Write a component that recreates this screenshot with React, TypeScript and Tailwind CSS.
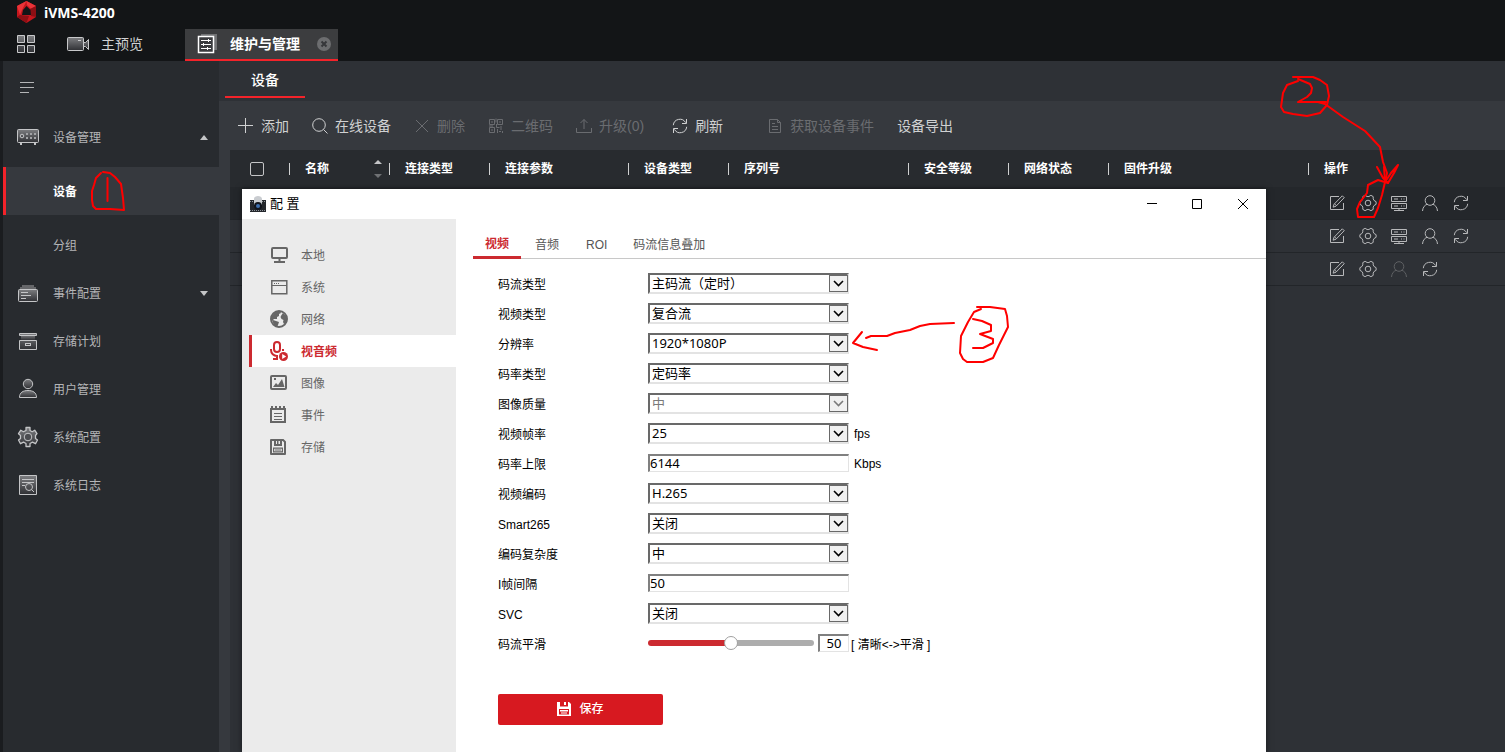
import { useState } from "react";
import type { ReactNode } from "react";

type IconProps = {
  className?: string;
  size?: number;
  children: ReactNode;
};

const LineIcon = ({ className = "", size = 16, children }: IconProps) => (
  <svg
    className={`shrink-0 ${className}`}
    width={size}
    height={size}
    viewBox={`0 0 ${size} ${size}`}
    fill="none"
    stroke="currentColor"
    aria-hidden="true"
  >
    {children}
  </svg>
);

/* ---------- Shared icons ---------- */

const RefreshIcon = () => (
  <LineIcon>
    <path d="M1.3 7.2A6.6 6.6 0 0 1 13.6 4.6M14.5 1v4.5H10M14.7 8.8A6.6 6.6 0 0 1 2.4 11.4M1.5 15v-4.5H6" />
  </LineIcon>
);

const EditIcon = () => (
  <LineIcon>
    <path d="M10 1.5H1.5v13h13V8" />
    <path d="M13.3.8l1.9 1.9-8.2 8.5-2.9 1 .9-2.9zM5.500 8.800l1.900 1.900" />
  </LineIcon>
);

const GearIcon = () => (
  <LineIcon size={18}>
    <path
      strokeLinejoin="round"
      d="M17.1 10.3V7.7L15.1 6.500l-.9-1.600V2.600L11.900 1.300 9.900 2.500H8.100L6.100 1.300 3.800 2.600v2.300L2.900 6.500.9 7.700v2.600l2 1.200.9 1.600v2.300l2.300 1.300 2-1.200h1.800l2 1.200 2.300-1.300v-2.300l.9-1.600z"
    />
    <circle cx="9" cy="9" r="2.8" />
  </LineIcon>
);

const ServerIcon = () => (
  <LineIcon>
    <path d="M.5 1.500h15v5H.5zM.5 8.500h15v5H.5zM8 13.500v2M3 15.500h10M3 4h4M3 11h4M10 4h1M12.500 4h1M10 11h1M12.500 11h1" />
  </LineIcon>
);

const PersonIcon = () => (
  <LineIcon>
    <circle cx="8" cy="5.500" r="4.800" />
    <path d="M.5 16c.3-4 2.500-6 4.800-6.800M15.500 16c-.3-4-2.500-6-4.800-6.800" />
  </LineIcon>
);

const DiskIcon = () => (
  <svg className="shrink-0" width="16" height="16" viewBox="0 0 16 16" aria-hidden="true">
    <path
      fill="currentColor"
      fillRule="evenodd"
      d="M0 1a1 1 0 0 1 1-1h12.500L16 2.500V15a1 1 0 0 1-1 1H1a1 1 0 0 1-1-1zM2 2v12h12V3.300L12.700 2H12v5H4V2zM6 2v3h1V2zM8.500 2v3H10V2zM3 8.500h10v5H3zM4.200 9.700v2.600h7.600V9.700z"
    />
    <path stroke="currentColor" d="M5 11h6" />
  </svg>
);

const SaveIcon = () => (
  <svg className="shrink-0" width="14" height="14" viewBox="0 0 14 14" aria-hidden="true">
    <path
      fill="currentColor"
      fillRule="evenodd"
      d="M0 0h12l2 2v12H0zM3 0v4.500h8V0H9v3H7V0zM2 7v5.500h10V7zM3 8h8v1.500H3zM4 10.500h6v1H4z"
    />
  </svg>
);

/* ---------- Left navigation ---------- */

const NavIcon = ({ children }: { children: ReactNode }) => (
  <svg
    className="shrink-0"
    width="22"
    height="22"
    viewBox="0 0 22 22"
    fill="url(#metal)"
    stroke="#c4c5c7"
    aria-hidden="true"
  >
    {children}
  </svg>
);

const navItems: { label: string; icon: ReactNode }[] = [
  {
    label: "事件配置",
    icon: (
      <NavIcon>
        <path stroke="none" fill="#66676a" d="M5 3h12v2H5zM3 5h16v2H3z" />
        <rect x="1.500" y="7.500" width="19" height="12" rx="1" />
        <path d="M4 10.500h7M4 13.500h10M4 16.500h5" />
      </NavIcon>
    ),
  },
  {
    label: "存储计划",
    icon: (
      <NavIcon>
        <path stroke="none" d="M4 5h14v5H4z" />
        <path d="M2.500 3.500h17v2h-17zM2.500 10.500h17v9h-17z" />
        <rect x="8.500" y="13.500" width="5" height="2" fill="none" />
      </NavIcon>
    ),
  },
  {
    label: "用户管理",
    icon: (
      <NavIcon>
        <circle cx="11" cy="6" r="4.700" />
        <path d="M2.500 19.500c0-5 3.500-7 8.500-7s8.500 2 8.500 7z" />
      </NavIcon>
    ),
  },
  {
    label: "系统配置",
    icon: (
      <NavIcon>
        <path
          d="M9 1.500h4v3l2.200 1.200 2.500-1.500 2.300 3.500L18.500 9.500v3l2 1.500-2 3.700-3-1.500L13 17.500v3H9v-3l-2.500-1.300-3 1.500-2-3.700 2-1.500v-3L1.500 7.700l2.300-3.500 2.700 1.500L9 4.500z"
          strokeLinejoin="round"
          strokeWidth="1.300"
        />
        <circle cx="11" cy="11" r="3.800" fill="#4b4c50" />
      </NavIcon>
    ),
  },
  {
    label: "系统日志",
    icon: (
      <NavIcon>
        <path d="M2.500 1.500h17v19h-17z" />
        <path fill="none" d="M5 5.500h12M5 8.500h12M5 11.500h3M14.500 15.500l2.500 2.500" />
        <circle cx="12" cy="13" r="3.500" fill="none" />
      </NavIcon>
    ),
  },
];

const Sidebar = () => (
  <nav className="w-[219px] shrink-0 border-l-[3px] border-[#1a1c1f] bg-[#282b2f] text-xs text-[#b4b5b7]">
    <button type="button" aria-label="折叠菜单" className="flex h-13 items-center pl-4">
      <svg width="16" height="14" viewBox="0 0 16 14" stroke="#b4b5b7" aria-hidden="true">
        <path d="M1 2.500h14M1 7.500h14M1 12.500h9" />
      </svg>
    </button>
    <a href="#devices" className="flex h-12 items-center gap-[14px] pl-[14px] pr-[11px]">
      <NavIcon>
        <rect x=".5" y="3.500" width="21" height="13" rx="1" />
        <circle cx="5" cy="10" r="1.800" fill="none" />
        <path stroke="#a2a3a6" strokeWidth="2" strokeDasharray="2 2" d="M9 8h11M9 12h11" />
        <path strokeWidth="2" d="M3 18h2M17 18h2" />
      </NavIcon>
      <span className="grow pt-[2px]">设备管理</span>
      <svg width="8" height="5" viewBox="0 0 8 5" aria-hidden="true">
        <path fill="#c4c5c7" d="M4 0l4 5H0z" />
      </svg>
    </a>
    <div className="flex flex-col gap-[6px] pt-[6px]">
      <a
        href="#device"
        className="flex h-12 items-center border-l-[3px] border-[#f4232a] bg-[#36393e] pt-[2px] pl-[47px] font-bold text-white"
      >
        设备
      </a>
      <a href="#group" className="flex h-12 items-center pt-[2px] pl-[50px]">
        分组
      </a>
    </div>
    {navItems.map((item, i) => (
      <a key={item.label} href="#nav" className="flex h-12 items-center gap-[14px] pl-[14px] pr-[11px]">
        {item.icon}
        <span className="grow pt-[2px]">{item.label}</span>
        {i === 0 && (
          <svg width="8" height="5" viewBox="0 0 8 5" aria-hidden="true">
            <path fill="#c4c5c7" d="M0 0h8L4 5z" />
          </svg>
        )}
      </a>
    ))}
  </nav>
);

/* ---------- Header ---------- */

const Header = () => (
  <header className="bg-[#131517]">
    <div className="flex h-[29px] items-start gap-2 pl-[17px]">
      <svg width="19" height="24" viewBox="0 0 19 24" aria-hidden="true">
        <path fill="#c5161d" d="M9.500 1L19 6v11l-9.500 6L0 17V6z" />
        <path fill="#ea3338" d="M9.500 1L19 6l-5 3-4-4zM0 6l9.500-5L5 10l-2 5z" />
        <path fill="#8d0f14" d="M0 17l3-2 9 1-2.500 7zM19 6v11l-5-1-1-7z" />
        <path fill="#131517" d="M9.500 6l4 4 .5 5H5l1-5z" />
      </svg>
      <h1 className="font-['Open_Sans'] text-sm leading-[26px] font-bold text-white">iVMS-4200</h1>
    </div>
    <div className="flex h-8 items-stretch text-sm text-[#d0d1d2]">
      <button type="button" aria-label="应用" className="flex items-center pb-[2px] pl-[17px]">
        <svg width="18" height="18" viewBox="0 0 18 18" fill="url(#metal)" stroke="#c8c9cb" aria-hidden="true">
          <path d="M.5.500h7v7h-7zM10.500.500h7v7h-7zM.5 10.500h7v7h-7zM10.500 10.500h7v7h-7z" />
        </svg>
      </button>
      <button type="button" className="ml-8 flex items-center gap-3 pb-[2px]">
        <svg width="22" height="16" viewBox="0 0 22 16" fill="url(#metal)" stroke="#c8c9cb" aria-hidden="true">
          <rect x=".5" y="1.500" width="16" height="13" rx="1" />
          <path d="M16.500 6.500h2l3-3v10l-3-3h-2zM11 4.500h3" />
        </svg>
        主预览
      </button>
      <div className="ml-[42px] flex items-center border-b-2 border-[#f4232a] bg-[#3c3d3f] pr-[7px] pl-3 text-white">
        <button type="button" className="flex items-center gap-3 font-bold">
          <svg width="21" height="20" viewBox="0 0 21 20" fill="none" stroke="#fff" aria-hidden="true">
            <path stroke="none" fill="#717274" d="M4 0h16v16h-3V3H4z" />
            <rect x="1.500" y="2.500" width="15" height="16" fill="#3a3b3e" strokeWidth="1.500" />
            <path d="M4 6.500h10M4 10.500h10M4 14.500h10M11.500 5v3M6.500 9v3M10.500 13v3" />
          </svg>
          维护与管理
        </button>
        <button type="button" aria-label="关闭标签" className="ml-[17px]">
          <svg width="14" height="14" viewBox="0 0 14 14" aria-hidden="true">
            <circle cx="7" cy="7" r="7" fill="#6c6d6f" />
            <path stroke="#36373a" strokeWidth="2" d="M4.500 4.500l5 5M9.500 4.500l-5 5" />
          </svg>
        </button>
      </div>
    </div>
  </header>
);

/* ---------- Device page ---------- */

type Tool = { label: string; icon?: ReactNode; disabled?: boolean; className?: string };

const tools: Tool[] = [
  { label: "添加", icon: <LineIcon><path d="M7.500 0v15M0 7.500h15" /></LineIcon> },
  {
    label: "在线设备",
    icon: <LineIcon><circle cx="7" cy="7" r="6.300" /><path d="M11.500 11.500l4 4" /></LineIcon>,
  },
  { label: "删除", disabled: true, icon: <LineIcon><path d="M2 2l12 12M14 2L2 14" /></LineIcon> },
  {
    label: "二维码",
    disabled: true,
    icon: (
      <LineIcon>
        <path d="M1.500 1.500h5v5h-5zM9.500 1.500h5v5h-5zM1.500 9.500h5v5h-5zM3 4h2M11 4h2M3 12h2M8 .5v4M8.500 6v3.500h3M1 8h4M13 8v4M9.500 11v4M11 13.500h2M14.500 13v2" />
      </LineIcon>
    ),
  },
  {
    label: "升级(0)",
    disabled: true,
    icon: <LineIcon><path d="M8 11V1.500M4.500 5L8 1.500 11.500 5M.5 10v4.500h15V10" /></LineIcon>,
  },
  { label: "刷新", className: "ml-[5px]", icon: <RefreshIcon /> },
  {
    label: "获取设备事件",
    disabled: true,
    className: "ml-[21px]",
    icon: <LineIcon><path d="M2.500 1.500h8l3 3v10h-11zM10.500 1.500v3h3M5 5.500h3M5 8.500h6M5 11.500h6" /></LineIcon>,
  },
  { label: "设备导出" },
];

const columns: { label: string; width: string; sortable?: boolean }[] = [
  { label: "名称", width: "w-[100px]", sortable: true },
  { label: "连接类型", width: "w-[100px]" },
  { label: "连接参数", width: "w-[139px]" },
  { label: "设备类型", width: "w-[100px]" },
  { label: "序列号", width: "w-[180px]" },
  { label: "安全等级", width: "w-[100px]" },
  { label: "网络状态", width: "w-[100px]" },
  { label: "固件升级", width: "w-[200px]" },
  { label: "操作", width: "" },
];

const rows = [
  { id: 1, selected: true, server: true },
  { id: 2, selected: false, server: true },
  { id: 3, selected: false, server: false },
];

const ActionButton = ({ label, disabled, children }: { label: string; disabled?: boolean; children: ReactNode }) => (
  <button
    type="button"
    aria-label={label}
    disabled={disabled}
    className="flex w-[31px] justify-center disabled:text-[#5f6164]"
  >
    {children}
  </button>
);

const DeviceTable = () => (
  <table className="w-full table-fixed border-separate border-spacing-0 text-left text-xs text-white">
    <thead>
      <tr className="h-[37px] bg-[#282b2f]">
        <th className="w-[59px] py-0 pl-5">
          <input
            type="checkbox"
            aria-label="全选"
            className="block size-[14px] appearance-none rounded-xs border border-[#c4c5c7]"
          />
        </th>
        {columns.map((column) => (
          <th key={column.label} className={`p-0 ${column.width}`}>
            <div className="flex items-center pr-[7px]">
              <span className="h-3 w-px bg-[#d0d1d2]" />
              <span className="grow pl-[15px]">{column.label}</span>
              {column.sortable && (
                <svg width="8" height="18" viewBox="0 0 8 18" aria-hidden="true">
                  <path fill="#c4c5c7" d="M4 0l4 4H0z" />
                  <path fill="#6f7174" d="M0 14h8l-4 4z" />
                </svg>
              )}
            </div>
          </th>
        ))}
      </tr>
    </thead>
    <tbody>
      {rows.map((row) => (
        <tr key={row.id} className={`h-[33px] ${row.selected ? "bg-[#24272b]" : "bg-[#2e3136]"}`}>
          <td colSpan={9} className="border-b border-[#222529] p-0" />
          <td className="border-b border-[#222529] p-0">
            <div className="flex items-center pl-[13px] text-[#b8b9bb]">
              <ActionButton label="编辑"><EditIcon /></ActionButton>
              <ActionButton label="远程配置"><GearIcon /></ActionButton>
              {row.server && <ActionButton label="设备状态"><ServerIcon /></ActionButton>}
              <ActionButton label="在线用户" disabled={!row.server}><PersonIcon /></ActionButton>
              <ActionButton label="刷新"><RefreshIcon /></ActionButton>
            </div>
          </td>
        </tr>
      ))}
    </tbody>
  </table>
);

const DevicePage = () => (
  <main className="flex min-w-0 grow flex-col bg-[#36393e]">
    <div className="h-10 bg-[#2e3136] pl-[6px]">
      <button type="button" className="h-[37px] w-20 border-b-2 border-[#f4232a] pt-[3px] text-sm font-medium text-white">
        设备
      </button>
    </div>
    <div className="flex h-[49px] items-center gap-[23px] pl-[19px] text-sm text-[#d0d1d2]">
      {tools.map((tool) => (
        <button
          key={tool.label}
          type="button"
          disabled={tool.disabled}
          className={`flex items-center gap-[7px] whitespace-nowrap disabled:text-[#6a6c70] ${tool.className ?? ""}`}
        >
          {tool.icon}
          {tool.label}
        </button>
      ))}
    </div>
    <div className="ml-[11px] grow bg-[#2e3136]">
      <DeviceTable />
    </div>
  </main>
);

/* ---------- Configuration window ---------- */

const MenuIcon = ({ children }: { children: ReactNode }) => (
  <svg
    className="shrink-0"
    width="18"
    height="20"
    viewBox="0 0 18 20"
    fill="none"
    stroke="currentColor"
    strokeWidth="2"
    aria-hidden="true"
  >
    {children}
  </svg>
);

const menu: { label: string; icon: ReactNode }[] = [
  {
    label: "本地",
    icon: <MenuIcon><rect x="2" y="3" width="15" height="10" rx="1" /><path d="M9.500 13v4M4 17h11" /></MenuIcon>,
  },
  {
    label: "系统",
    icon: (
      <MenuIcon>
        <path strokeWidth="1.500" d="M1.800 3.800h15v13h-15z" />
        <path strokeWidth="1" d="M2 8.500h15" />
        <path strokeWidth="1" strokeDasharray="1 1" d="M4 6.500h6" />
      </MenuIcon>
    ),
  },
  {
    label: "网络",
    icon: (
      <MenuIcon>
        <circle cx="9" cy="10" r="8" />
        <path
          fill="currentColor"
          stroke="none"
          d="M2 7l3-4 5-1 1 2-2 1v2L7 8v2H4l-1 1 3 1 3 1-1 3-1 2-3-2-2-5zM13 4l3 3 1 3-1 4-2 1-1-2 .500-2-2-1-1-2 1-2z"
        />
      </MenuIcon>
    ),
  },
  {
    label: "视音频",
    icon: (
      <MenuIcon>
        <rect x="4" y="1" width="6" height="10" rx="3" />
        <path d="M1 8v1a6 6 0 0 0 6 6M7 14v4M3 18h5M13 8v2" />
        <circle cx="13.500" cy="15.500" r="4.500" fill="currentColor" stroke="none" />
        <path d="M12.200 13l4 2.500-4 2.500z" fill="#fff" stroke="none" />
      </MenuIcon>
    ),
  },
  {
    label: "图像",
    icon: (
      <MenuIcon>
        <rect x="1" y="3" width="15" height="13" rx="1" />
        <path fill="currentColor" stroke="none" d="M3 14l3-4 2 2 4-6 2.500 8zM4 5h2v2H4z" />
      </MenuIcon>
    ),
  },
  {
    label: "事件",
    icon: (
      <MenuIcon>
        <path d="M1 4h14v13H1zM2 1v3M6 1v3M10 1v3M14 1v3" />
        <path strokeWidth="1" d="M4 8.500h8M4 11.500h8M4 14.500h8" />
      </MenuIcon>
    ),
  },
  { label: "存储", icon: <span className="flex w-[18px]"><DiskIcon /></span> },
];

const Field = ({ id, label, children }: { id: string; label: string; children: ReactNode }) => (
  <div className="flex h-[30px] items-center">
    <label htmlFor={id} className="w-[150px] pt-[3px]">
      {label}
    </label>
    {children}
  </div>
);

const SelectBox = ({ id, value, disabled }: { id: string; value: string; disabled?: boolean }) => (
  <div className={`relative ${disabled ? "text-[#7a7a7a]" : "text-black"}`}>
    <select
      id={id}
      disabled={disabled}
      className="block h-[21px] w-[201px] appearance-none border-2 border-t-[#696969] border-r-[#e3e3e3] border-b-[#e3e3e3] border-l-[#696969] bg-white pl-[2px] font-['Noto_Sans','Noto_Sans_CJK_SC',sans-serif] text-[13px] leading-4 opacity-100"
    >
      <option>{value}</option>
    </select>
    <span className="pointer-events-none absolute top-[2px] right-px flex h-[17px] w-[19px] items-center justify-center border border-[#696969] bg-[#f0f0f0]">
      <svg width="11" height="7" viewBox="0 0 11 7" fill="none" stroke="currentColor" strokeWidth="1.600" aria-hidden="true">
        <path d="M1 1l4.500 4.500L10 1" />
      </svg>
    </span>
  </div>
);

const inputClass =
  "h-[18px] border border-t-2 border-l-2 border-t-[#808080] border-r-[#e3e3e3] border-b-[#e3e3e3] border-l-[#808080] bg-white pb-[2px] font-['Noto_Sans',sans-serif] text-[13px] leading-4 text-black";

const ConfigWindow = () => {
  const [smooth, setSmooth] = useState(50);

  return (
    <section
      aria-label="配置"
      className="absolute top-[189px] right-[239px] bottom-0 left-[242px] flex flex-col overflow-hidden bg-white text-xs text-black shadow-[0_0_6px_rgba(0,0,0,0.5)]"
    >
      {/* Title bar */}
      <div className="flex h-[30px] shrink-0 items-center pl-2">
        <svg width="16" height="17" viewBox="0 0 16 17" aria-hidden="true">
          <path fill="#23262b" d="M0 4h16v12H0z" />
          <path stroke="#8d9299" strokeDasharray="1 1" d="M0 5.500h16M0 14.500h16" />
          <path fill="#c9ccd0" d="M4 3c0-4 8-4 8 0v6H4z" />
          <circle cx="8" cy="10" r="4" fill="#10141c" />
          <circle cx="8" cy="10" r="2" fill="#3f6fae" />
        </svg>
        <h2 className="grow pl-1 text-[13px]">配 置</h2>
        <button type="button" aria-label="最小化" className="flex h-full w-[45px] items-center justify-center">
          <svg width="10" height="10" viewBox="0 0 10 10" stroke="#000"><path d="M0 4.500h10" /></svg>
        </button>
        <button type="button" aria-label="最大化" className="flex h-full w-[46px] items-center justify-center">
          <svg width="10" height="10" viewBox="0 0 10 10" fill="none" stroke="#000"><path d="M.5.500h9v9h-9z" /></svg>
        </button>
        <button type="button" aria-label="关闭" className="flex h-full w-[46px] items-center justify-center">
          <svg width="10" height="10" viewBox="0 0 10 10" stroke="#000"><path d="M0 0l10 10M10 0L0 10" /></svg>
        </button>
      </div>

      <div className="flex min-h-0 grow">
        {/* Menu */}
        <nav className="w-[214px] shrink-0 bg-[#ebebeb] pt-5 pl-[7px]">
          {menu.map((item) => (
            <a
              key={item.label}
              href="#menu"
              className={
                item.label === "视音频"
                  ? "flex h-8 items-center gap-[13px] border-l-[3px] border-[#cc2a30] bg-white pl-[18px] font-bold text-[#cc2a30]"
                  : "flex h-8 items-center gap-[13px] border-l-[3px] border-transparent pl-[18px] text-[#666]"
              }
            >
              {item.icon}
              <span className="pt-[2px]">{item.label}</span>
            </a>
          ))}
        </nav>

        {/* Content */}
        <div className="grow pl-[17px]">
          <div className="flex h-10 items-end border-b border-[#c8c8c8] text-[#555]">
            <button
              type="button"
              className="-mb-px h-[31px] w-12 border-b-[3px] border-[#cc2a30] pt-1 font-bold text-[#cc2a30]"
            >
              视频
            </button>
            <button type="button" className="ml-[14px] h-[26px]">音频</button>
            <button type="button" className="ml-[27px] h-[26px]">ROI</button>
            <button type="button" className="ml-[26px] h-[26px]">码流信息叠加</button>
          </div>

          <form className="pt-[9px] pl-[25px]" onSubmit={(e) => e.preventDefault()}>
            <Field id="stream" label="码流类型"><SelectBox id="stream" value="主码流（定时）" /></Field>
            <Field id="video" label="视频类型"><SelectBox id="video" value="复合流" /></Field>
            <Field id="resolution" label="分辨率"><SelectBox id="resolution" value="1920*1080P" /></Field>
            <Field id="bitrateType" label="码率类型"><SelectBox id="bitrateType" value="定码率" /></Field>
            <Field id="quality" label="图像质量"><SelectBox id="quality" value="中" disabled /></Field>
            <Field id="fps" label="视频帧率">
              <SelectBox id="fps" value="25" />
              <span className="pt-[2px] pl-[5px]">fps</span>
            </Field>
            <Field id="maxBitrate" label="码率上限">
              <input id="maxBitrate" defaultValue="6144" className={`w-[201px] ${inputClass}`} />
              <span className="pt-[2px] pl-[5px]">Kbps</span>
            </Field>
            <Field id="encoding" label="视频编码"><SelectBox id="encoding" value="H.265" /></Field>
            <Field id="smart" label="Smart265"><SelectBox id="smart" value="关闭" /></Field>
            <Field id="complexity" label="编码复杂度"><SelectBox id="complexity" value="中" /></Field>
            <Field id="iframe" label="I帧间隔">
              <input id="iframe" defaultValue="50" className={`w-[201px] ${inputClass}`} />
            </Field>
            <Field id="svc" label="SVC"><SelectBox id="svc" value="关闭" /></Field>
            <Field id="smooth" label="码流平滑">
              <input
                id="smooth"
                type="range"
                value={smooth}
                onChange={(e) => setSmooth(Number(e.target.value))}
                style={{ backgroundImage: `linear-gradient(to right, #cc2a30 ${smooth}%, #adadad ${smooth}%)` }}
                className="h-[6px] w-[166px] appearance-none rounded-full [&::-webkit-slider-thumb]:size-[14px] [&::-webkit-slider-thumb]:appearance-none [&::-webkit-slider-thumb]:rounded-full [&::-webkit-slider-thumb]:border [&::-webkit-slider-thumb]:border-[#a0a0a0] [&::-webkit-slider-thumb]:bg-white"
              />
              <input
                aria-label="码流平滑值"
                value={smooth}
                onChange={(e) => setSmooth(Number(e.target.value) || 0)}
                className={`ml-1 w-[31px] text-center ${inputClass}`}
              />
              <span className="pt-[3px] pl-[2px]">[ 清晰&lt;-&gt;平滑 ]</span>
            </Field>
            <button
              type="submit"
              className="mt-9 flex h-[31px] w-[165px] items-center justify-center gap-2 rounded-xs bg-[#d71920] pb-px font-medium text-white"
            >
              <SaveIcon />
              保存
            </button>
          </form>
        </div>
      </div>
    </section>
  );
};

/* ---------- Pen marks ---------- */

const PenMarks = () => (
  <svg
    className="pointer-events-none absolute top-0 left-0"
    width="1505"
    height="752"
    viewBox="0 0 1505 752"
    fill="none"
    stroke="#f00"
    strokeWidth="2"
    strokeLinecap="round"
    strokeLinejoin="round"
    aria-hidden="true"
  >
    <path d="M101 173l-5 5-2 7-2 6v9l1 6 3 3h14l14 1-1-12-2-14-6-7-5-4-7-1M107.500 178v23" />
    <path d="M1293 77h20l7 3 7 5 2 11-2 9-7 8-13 3-14-2-9-2-3-5 2-14 4-8 11-4" />
    <path d="M1298 79l12 5 2 4-1 5-4 4-9 5h28M1318 102l7 2 18 13 22 14 15 16 3 15 4 11-2 9" />
    <path d="M1377 167l6 11 5 5 6-10 4-8-7 8-6 9-1-15" />
    <path d="M1388 183l-10-3-10 5-1 8-7 9-3 7 1 8h16l4-9 4-13 3-13" />
    <path d="M981 309l-7 3-6 10-7 14-1 17 3 6 4 3h16l10-4 6-13 9-18-1-11-2-7-15-2h-13" />
    <path d="M973 319l9 2 9 4v6l-11 3 13 5v4l-10 5h-10" />
    <path d="M954 323l-24 1-10 2-10 4-15 3-8 3h-16l-5 2M862 332l-9 11 10 4 14 3" />
  </svg>
);

const App = () => (
  <div className="relative flex min-h-screen flex-col overflow-hidden bg-[#131517] font-['Liberation_Sans','Noto_Sans_CJK_SC',sans-serif]">
    <svg width="0" height="0" className="absolute" aria-hidden="true">
      <defs>
        <linearGradient id="metal" x1="0" y1="0" x2="0" y2="1">
          <stop offset="0" stopColor="#7d7e81" />
          <stop offset="1" stopColor="#2f3034" />
        </linearGradient>
      </defs>
    </svg>
    <Header />
    <div className="flex grow">
      <Sidebar />
      <DevicePage />
    </div>
    <ConfigWindow />
    <PenMarks />
  </div>
);

export default App;
